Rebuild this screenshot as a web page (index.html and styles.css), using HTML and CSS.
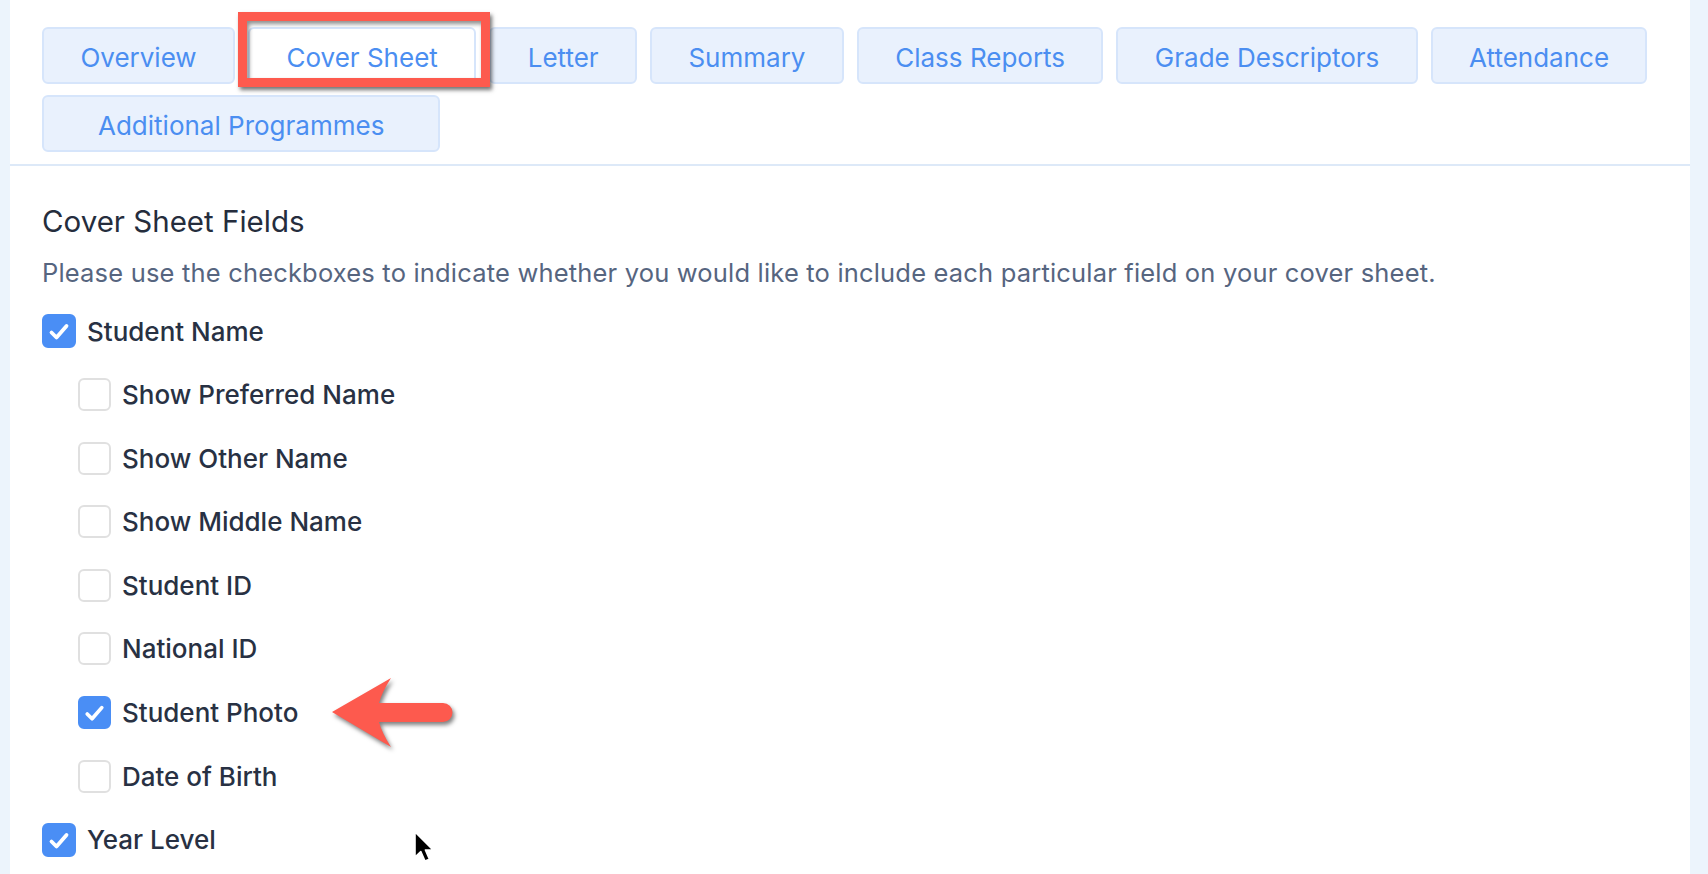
FILE: index.html
```html
<!DOCTYPE html>
<html lang="en">
<head>
    <meta charset="UTF-8">
    <meta name="viewport" content="width=device-width, initial-scale=1.0">
    <title>Report Settings - Cover Sheet</title>
    <link rel="stylesheet" href="styles.css">
</head>
<body>
    <div class="panel">
        <nav class="tabs">
            <a class="tab">Overview</a>
            <a class="tab active">Cover Sheet</a>
            <a class="tab">Letter</a>
            <a class="tab">Summary</a>
            <a class="tab">Class Reports</a>
            <a class="tab">Grade Descriptors</a>
            <a class="tab">Attendance</a>
            <a class="tab wide">Additional Programmes</a>
        </nav>

        <section class="fields">
            <h2>Cover Sheet Fields</h2>
            <p class="hint">Please use the checkboxes to indicate whether you would like to include each particular field on your cover sheet.</p>
            <ul class="field-list">
                <li class="field"><span class="box checked"><svg viewBox="0 0 34 34"><polyline points="9.5,18.5 14.5,23.5 24.5,12"/></svg></span>Student Name</li>
                <li class="field sub"><span class="box"></span>Show Preferred Name</li>
                <li class="field sub"><span class="box"></span>Show Other Name</li>
                <li class="field sub"><span class="box"></span>Show Middle Name</li>
                <li class="field sub"><span class="box"></span>Student ID</li>
                <li class="field sub"><span class="box"></span>National ID</li>
                <li class="field sub"><span class="box checked"><svg viewBox="0 0 34 34"><polyline points="9.5,18.5 14.5,23.5 24.5,12"/></svg></span>Student Photo</li>
                <li class="field sub"><span class="box"></span>Date of Birth</li>
                <li class="field"><span class="box checked"><svg viewBox="0 0 34 34"><polyline points="9.5,18.5 14.5,23.5 24.5,12"/></svg></span>Year Level</li>
            </ul>
        </section>

        <!-- annotations drawn over the screenshot -->
        <div class="callout-box"></div>
        <svg class="callout-arrow" viewBox="0 0 135 85" width="135" height="85">
            <path d="M7 42 L66 8 Q57 22 54 33 L118 33 A9.5 9.5 0 0 1 118 52 L54 52 Q57 63 66 77 Z"/>
        </svg>
        <svg class="cursor" viewBox="0 0 24 34" width="24" height="34">
            <path d="M2 2 L2 27 L7.8 21.6 L12 31 L16.4 29.2 L12.4 20 L20 20 Z"/>
        </svg>
    </div>
</body>
</html>
```

FILE: styles.css
```css
body {
    margin: 0;
    background-color: #ecf4fc;
    font-family: 'Inter', 'Liberation Sans', sans-serif;
    color: #283143;
    overflow: hidden;
}
.panel {
    position: relative;
    margin-left: 10px;
    width: 1680px;
    min-height: 874px;
    background-color: #fff;
}
.tabs {
    display: flex;
    flex-wrap: wrap;
    column-gap: 13px;
    row-gap: 11px;
    padding: 27px 32px 12px 32px;
    border-bottom: 2px solid #dde9f8;
}
.tab {
    display: flex;
    align-items: center;
    height: 57px;
    box-sizing: border-box;
    padding: 3px 36.4px 0 36.4px;
    border: 2px solid #d6e5fb;
    border-radius: 6px;
    background-color: #e9f1fd;
    color: #4b8ef1;
    font-size: 26px;
    cursor: pointer;
}
.tab.active {
    background-color: #fff;
    padding: 3px 36.5px 0 36.5px;
}
.tab.wide {
    padding: 3px 54px 0 54px;
}
.fields {
    padding: 38px 32px 0 32px;
}
.fields h2 {
    margin: 0;
    font-size: 29.5px;
    font-weight: 400;
    line-height: 34px;
    color: #252d3d;
}
.hint {
    margin: 20px 0 26px 0;
    font-size: 25.5px;
    letter-spacing: 0.18px;
    line-height: 30px;
    color: #56657f;
}
.field-list {
    list-style: none;
    margin: 0;
    padding: 0;
    display: flex;
    flex-direction: column;
    gap: 29.6px;
}
.field {
    display: flex;
    align-items: center;
    gap: 11px;
    height: 34px;
    font-size: 26px;
    font-weight: 500;
    color: #283143;
}
.field.sub {
    padding-left: 36px;
}
.box {
    width: 34px;
    height: 34px;
    box-sizing: border-box;
    border: 2px solid #e0e0e0;
    border-radius: 6px;
    background-color: #fff;
}
.field.sub .box {
    width: 33px;
    height: 33px;
}
.box.checked {
    background-color: #4a8ef5;
    border-color: #4a8ef5;
}
.box svg {
    display: block;
    margin: -2px;
    width: calc(100% + 4px);
    height: calc(100% + 4px);
}
.box polyline {
    fill: none;
    stroke: #fff;
    stroke-width: 3.8;
    stroke-linecap: round;
    stroke-linejoin: round;
}
.callout-box {
    position: absolute;
    left: 228px;
    top: 12px;
    width: 252px;
    height: 75px;
    box-sizing: border-box;
    border: 9px solid #fd5a4e;
    box-shadow: 2px 3px 4px rgba(0,0,0,0.55), inset 2px 3px 4px rgba(0,0,0,0.45);
}
.callout-arrow {
    position: absolute;
    left: 315px;
    top: 670px;
    fill: #fd5a4e;
    filter: drop-shadow(2px 3px 2px rgba(0,0,0,0.5));
}
.cursor {
    position: absolute;
    left: 403px;
    top: 830px;
    fill: #000;
    stroke: #fff;
    stroke-width: 1.6;
    stroke-linejoin: round;
}
```
